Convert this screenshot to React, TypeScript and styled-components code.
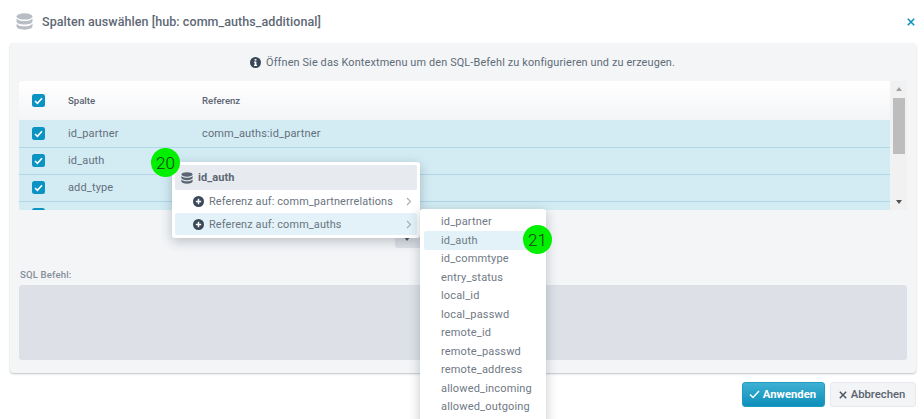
import React from "react";
import styled, { createGlobalStyle } from "styled-components";

const Global = createGlobalStyle`
  html, body { margin: 0; padding: 0; background: #fff; overflow: hidden; }
  body { font-family: Roboto, "Liberation Sans", sans-serif; color: #5f6b7a; -webkit-font-smoothing: antialiased; }
`;
const Page = styled.div`
  position: relative; width: 924px; height: 419px; overflow: hidden;
  display: flex; flex-direction: column; background: #fff;
`;
const Header = styled.header`
  height: 43px; flex: none; display: flex; align-items: center; padding: 0 10px 0 16px; gap: 9px; box-sizing: border-box;
`;
const Title = styled.h1`
  margin: 0; flex: 1; font-size: 12.5px; font-weight: 500; color: #5e6875; letter-spacing: .07px;
`;
const Close = styled.span` display: flex; color: #0b93c1; margin-right: -1px; `;
const Panel = styled.section`
  width: 906px; height: 330px; margin-left: 10px; box-sizing: border-box; flex: none;
  background: #f3f5f7; border-radius: 4px; box-shadow: 0 1px 2px rgba(70,80,90,.35);
  padding: 0 9px 13px; display: flex; flex-direction: column;
`;
const Info = styled.div`
  height: 38px; flex: none; display: flex; align-items: center; justify-content: center; gap: 5px;
  font-size: 10.9px; color: #5f6b78; letter-spacing: .13px; padding-right: 1px; box-sizing: border-box;
`;
const TableWrap = styled.div`
  height: 129px; flex: none; display: flex; overflow: hidden; border-radius: 3px; background: #d3ecf4;
`;
const TableBody = styled.div` flex: 1; min-width: 0; `;
const HeadRow = styled.div`
  height: 39px; margin-bottom: 1px; display: grid; grid-template-columns: 49px 134px 1fr; align-items: center;
  background: linear-gradient(#fff, #f4f5f7); font-size: 9.6px; font-weight: 500; color: #5a6472;
`;
const Row = styled.div`
  height: 27px; padding-bottom: 1px; box-sizing: border-box; display: grid; grid-template-columns: 49px 134px 1fr; align-items: center;
  background: #d3ecf4; border-bottom: 1px solid #b1d6e6; font-size: 11px; color: #646f7c; letter-spacing: .14px;
`;
const Check = styled.span`
  width: 13px; height: 13px; margin-left: 13px; border-radius: 2.5px; background: #0b93c4;
  display: flex; align-items: center; justify-content: center;
`;
const Scrollbar = styled.div`
  width: 17px; flex: none; background: #f1f1f1; display: flex; flex-direction: column; align-items: center;
`;
const Arrow = styled.span<{ $up?: boolean }>`
  width: 0; height: 0; margin: 6px 0; border-left: 3.5px solid transparent; border-right: 3.5px solid transparent;
  ${p => p.$up ? `border-bottom: 4px solid #a3a3a3;` : `border-top: 4px solid #505050;`}
`;
const Thumb = styled.div` width: 12px; height: 56px; background: #bdbdbd; margin: 1px 0 auto; `;
const ActionRow = styled.div`
  height: 65px; flex: none; display: flex; justify-content: center; align-items: flex-start; padding-top: 14px; box-sizing: border-box;
`;
const MoveBtn = styled.div`
  width: 136px; height: 24px; border-radius: 3px; background: #dde1e7;
  display: flex; align-items: center; padding: 5px 0 0 9px; box-sizing: border-box;
`;
const SqlLabel = styled.label`
  font-size: 9.6px; font-weight: 500; color: #858e9a; height: 10px; line-height: 10px; margin: -5px 0 5px; padding-left: 1px; letter-spacing: .15px; display: block;
`;
const SqlBox = styled.div` height: 75px; flex: none; background: #dde1e7; border-radius: 3px; `;
const Footer = styled.footer`
  flex: none; height: 25px; margin-top: 9px; display: flex; justify-content: flex-end; gap: 5px; padding-right: 8px;
`;
const Button = styled.button<{ $primary?: boolean }>`
  font-family: inherit; height: 25px; border-radius: 3px; display: flex; align-items: center; justify-content: center; padding: 0 2px 0 0;
  gap: ${p => p.$primary ? 3 : 4}px;
  font-size: 11.3px; font-weight: ${p => p.$primary ? 700 : 500}; cursor: pointer; box-sizing: border-box;
  width: ${p => p.$primary ? "83px" : "86px"};
  color: ${p => p.$primary ? "#fff" : "#59636f"};
  background: ${p => p.$primary ? "linear-gradient(#3fb0d3, #0d8fba)" : "#f2f4f6"};
  border: 1px solid ${p => p.$primary ? "#1f9cc4" : "#e6e9ed"};
`;
const Menu = styled.div<{ $left: number; $top: number; $width: number }>`
  position: absolute; left: ${p => p.$left}px; top: ${p => p.$top}px; width: ${p => p.$width}px; box-sizing: border-box;
  background: #fff; border-radius: 3px; box-shadow: 0 3px 12px rgba(50,60,75,.3);
`;
const MainMenu = styled(Menu)` height: 76px; padding: 3px; `;
const SubMenu = styled(Menu)` height: 230px; padding: 3.5px 4px; `;
const MenuHead = styled.div`
  height: 25px; background: #e7eaee; border-radius: 2px; display: flex; align-items: center; gap: 5px; padding-left: 6px;
  font-size: 11px; font-weight: 700; color: #5b6674; letter-spacing: .1px;
`;
const MenuItem = styled.div<{ $active?: boolean }>`
  height: 22px; margin-top: ${p => p.$active ? "1px" : "0"}; border-radius: 2px; display: flex; align-items: center; padding: 0 5px 0 18px; gap: 5px;
  background: ${p => p.$active ? "#e3f2f8" : "transparent"}; font-size: 10.9px; color: #6a7480; letter-spacing: .13px;
`;
const Grow = styled.span` flex: 1; `;
const SubItem = styled.div<{ $active?: boolean }>`
  height: 18.5px; display: flex; align-items: center; padding-left: 17px; border-radius: 2px;
  background: ${p => p.$active ? "#e3f2f8" : "transparent"}; font-size: 11px; color: #6f7985; letter-spacing: .17px;
`;
const Marker = styled.div<{ $left: number; $top: number }>`
  position: absolute; left: ${p => p.$left}px; top: ${p => p.$top}px; width: 29px; height: 29px; border-radius: 50%;
  background: #00f000; color: #1a3a1a; font-size: 17px; font-weight: 300; display: flex; align-items: center; justify-content: center;
`;

const Db = ({ size, color }: { size: number; color: string }) => (
  <svg width={size} height={size} viewBox="0 0 16 16" fill={color}>
    <ellipse cx="8" cy="3.2" rx="7.500" ry="3" />
    <path d="M.5 5.200c1.200 1.600 4 2.400 7.500 2.400s6.300-.8 7.500-2.400v2.800c0 1.600-3.400 2.900-7.500 2.900S.5 9.600.5 8z" />
    <path d="M.5 10c1.200 1.600 4 2.400 7.500 2.400s6.300-.8 7.500-2.400v2.800c0 1.600-3.400 2.900-7.500 2.900S.5 14.400.5 12.800z" />
  </svg>
);
const CheckBox = () => (
  <Check>
    <svg width="9" height="8" viewBox="0 0 9 8" fill="none" stroke="#fff" strokeWidth="1.600">
      <path d="M1 4l2.400 2.300L8 1.300" />
    </svg>
  </Check>
);
const InfoIcon = () => (
  <svg width="11" height="11" viewBox="0 0 11 11">
    <circle cx="5.500" cy="5.500" r="5.500" fill="#3a4758" />
    <rect x="4.700" y="2" width="1.700" height="1.600" fill="#fff" />
    <path d="M4 4.500h2.400v3.200h.7V9H4V7.700h.7V5.800H4z" fill="#fff" />
  </svg>
);
const PlusIcon = () => (
  <svg width="11" height="11" viewBox="0 0 11 11">
    <circle cx="5.500" cy="5.500" r="5.500" fill="#3a4758" />
    <path d="M5.500 2.800v5.400M2.800 5.500h5.400" stroke="#fff" strokeWidth="1.500" />
  </svg>
);
const Chevron = () => (
  <svg width="6" height="9" viewBox="0 0 6 9" fill="none" stroke="#a6adb6" strokeWidth="1.100">
    <path d="M1 1l3.500 3.500L1 8" />
  </svg>
);
const XIcon = ({ size, color, w }: { size: number; color: string; w: number }) => (
  <svg width={size} height={size} viewBox="0 0 10 10" fill="none" stroke={color} strokeWidth={w}>
    <path d="M1 1l8 8M9 1l-8 8" />
  </svg>
);

const rows = [
  ["id_partner", "comm_auths:id_partner"],
  ["id_auth", ""],
  ["add_type", ""],
  ["", ""],
];
const subItems = [
  "id_partner", "id_auth", "id_commtype", "entry_status", "local_id", "local_passwd",
  "remote_id", "remote_passwd", "remote_address", "allowed_incoming", "allowed_outgoing", "",
];

export default function App() {
  return (
    <Page>
      <Global />
      <Header>
        <Db size={17} color="#b9bec5" />
        <Title>Spalten auswählen [hub: comm_auths_additional]</Title>
        <Close><XIcon size={8} color="#0b93c1" w={2} /></Close>
      </Header>
      <Panel>
        <Info><InfoIcon />Öffnen Sie das Kontextmenu um den SQL-Befehl zu konfigurieren und zu erzeugen.</Info>
        <TableWrap>
          <TableBody>
            <HeadRow><CheckBox /><span>Spalte</span><span>Referenz</span></HeadRow>
            {rows.map((r, i) => (
              <Row key={i}><CheckBox /><span>{r[0]}</span><span>{r[1]}</span></Row>
            ))}
          </TableBody>
          <Scrollbar>
            <Arrow $up />
            <Thumb />
            <Arrow />
          </Scrollbar>
        </TableWrap>
        <ActionRow>
          <MoveBtn><Arrow /></MoveBtn>
        </ActionRow>
        <SqlLabel>SQL Befehl:</SqlLabel>
        <SqlBox />
      </Panel>
      <Footer>
        <Button $primary>
          <svg width="11" height="9" viewBox="0 0 11 9" fill="none" stroke="#fff" strokeWidth="1.400"><path d="M1 4.500l3 3L10 1" /></svg>
          Anwenden
        </Button>
        <Button><XIcon size={8} color="#4a5562" w={1.800} />Abbrechen</Button>
      </Footer>
      <MainMenu $left={172} $top={162} $width={248}>
        <MenuHead><Db size={12} color="#5b6674" />id_auth</MenuHead>
        <MenuItem><PlusIcon /><Grow>Referenz auf: comm_partnerrelations</Grow><Chevron /></MenuItem>
        <MenuItem $active><PlusIcon /><Grow>Referenz auf: comm_auths</Grow><Chevron /></MenuItem>
      </MainMenu>
      <SubMenu $left={420} $top={209} $width={126}>
        {subItems.map((s, i) => <SubItem key={i} $active={i === 1}>{s}</SubItem>)}
      </SubMenu>
      <Marker $left={151} $top={148}>20</Marker>
      <Marker $left={523} $top={225}>21</Marker>
    </Page>
  );
}
